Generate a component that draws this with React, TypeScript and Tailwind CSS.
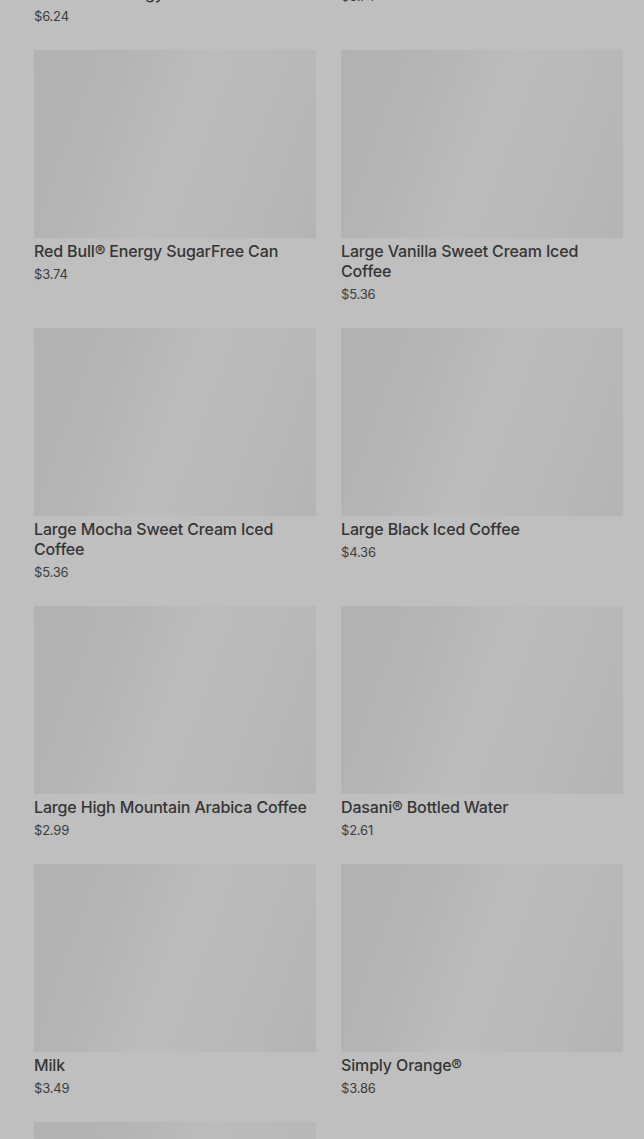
import React from "react";

type Item = { title: React.ReactNode; price: string };

const items: Item[] = [
  { title: <>Sugar Free Ultra White<br />Monster® Energy Drink</>, price: "$6.24" },
  { title: "Coca-Cola® Bottle", price: "$3.74" },
  { title: "Red Bull® Energy SugarFree Can", price: "$3.74" },
  { title: "Large Vanilla Sweet Cream Iced Coffee", price: "$5.36" },
  { title: "Large Mocha Sweet Cream Iced Coffee", price: "$5.36" },
  { title: "Large Black Iced Coffee", price: "$4.36" },
  { title: "Large High Mountain Arabica Coffee", price: "$2.99" },
  { title: "Dasani® Bottled Water", price: "$2.61" },
  { title: "Milk", price: "$3.49" },
  { title: "Simply Orange®", price: "$3.86" },
  { title: "Orange Juice", price: "$3.49" },
];

function Card({ item }: { item: Item }) {
  return (
    <div className="flex flex-col">
      <div className="h-[188px] w-full bg-[linear-gradient(110deg,#b2b2b2_0%,#b4b4b4_25%,#bcbcbc_50%,#b9b9b9_75%,#b4b4b4_100%)]" />
      <div className="mt-[3px] text-[16px] leading-[20px] font-medium text-[#353535] tracking-[-0.15px]">
        {item.title}
      </div>
      <div className="mt-[3px] text-[13px] leading-[20px] text-[#3d3d3d] tracking-[-0.2px]">{item.price}</div>
    </div>
  );
}

export default function App() {
  return (
    <div
      className="h-[1139px] w-[644px] overflow-hidden bg-[#bfbfbf]"
      style={{ fontFamily: "Inter, Roboto, 'Noto Sans', sans-serif" }}
    >
      <div className="mt-[-228px] grid grid-cols-2 gap-x-[25px] gap-y-[24px] pl-[34px] pr-[21px]">
        {items.map((it, i) => (
          <Card key={i} item={it} />
        ))}
      </div>
    </div>
  );
}
